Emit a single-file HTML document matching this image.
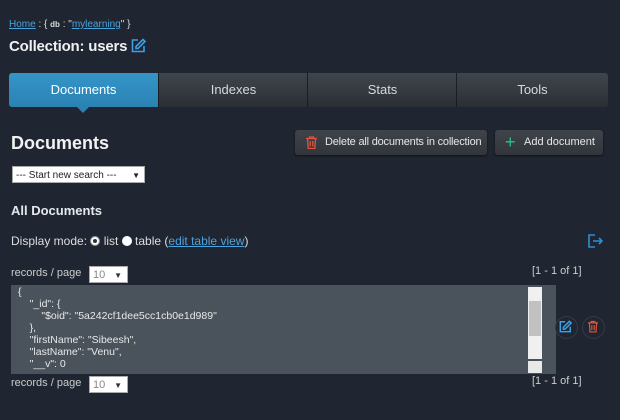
<!DOCTYPE html><html><head><style>
body{margin:0;width:620px;height:420px;background:#1f2631;font-family:"Liberation Sans",sans-serif;color:#e6e9ec;position:relative;overflow:hidden}
.a{position:absolute;white-space:nowrap}
a{color:#4aa3df;text-decoration:underline}
.tab{position:absolute;top:73px;height:34px;line-height:34px;text-align:center;font-size:13px;color:#d6d9dc;background:linear-gradient(#40454c,#2b2f35);border-left:1px solid #1a1d22}
.btn{position:absolute;top:130px;height:25px;line-height:25px;font-size:11px;background:linear-gradient(#3f444a,#32363c);border-radius:3px;color:#e6e6e6;box-shadow:0 1px 2px #111;white-space:nowrap}
.sel{position:absolute;background:#fff;color:#888;font-size:11px;height:17px;line-height:17px;padding-left:3px;border:1px solid #aaa;box-sizing:border-box;white-space:nowrap}
</style></head><body>
<div class="a" style="left:9px;top:19px;font-size:10px;color:#ddd"><a>Home</a> : { <b style="font-size:8px">db</b> : "<a>mylearning</a>" }</div>
<div class="a" style="left:9px;top:38px;font-size:15px;font-weight:bold;color:#f0f0f0;letter-spacing:-0.2px">Collection: users</div>
<svg class="a" style="left:131px;top:38px" width="15" height="15" viewBox="0 0 15 15" fill="none" stroke="#3ba0e6" stroke-width="1.6"><path d="M7 2H1.5v11.5H13V8"/><path d="M12 1.5l2 2-7 7H5V8.5z"/></svg>
<div class="tab" style="left:9px;width:149px;background:linear-gradient(#3595c8,#2a82b2);color:#fff;border-radius:3px 0 0 3px;border:none">Documents</div>
<div class="a" style="left:76px;top:106px;width:0;height:0;border:7px solid transparent;border-top-color:#2a82b2"></div>
<div class="tab" style="left:158px;width:149px">Indexes</div>
<div class="tab" style="left:307px;width:149px">Stats</div>
<div class="tab" style="left:456px;width:151px;border-radius:0 3px 3px 0">Tools</div>
<div class="a" style="left:11px;top:133px;font-size:18px;font-weight:bold;color:#f2f2f2">Documents</div>
<div class="btn" style="left:295px;width:192px"><svg class="a" style="left:11px;top:6px" width="11" height="13" viewBox="0 0 11 13" fill="none" stroke="#e0553e" stroke-width="1.3"><path d="M0 2.5h11M3.5 2.5V1h4v1.5M1.5 2.5l.7 10h6.6l.7-10M4.2 5v5.5M6.8 5v5.5"/></svg><span class="a" style="left:30px;letter-spacing:-0.2px">Delete all documents in collection</span></div>
<div class="btn" style="left:495px;width:108px"><span class="a" style="left:10px;color:#2fbf8a;font-size:18px;line-height:24px">+</span><span class="a" style="left:29px">Add document</span></div>
<div class="sel" style="left:12px;top:166px;width:133px;color:#222;font-size:10px">--- Start new search --- <span style="position:absolute;right:4px;font-size:8px">▼</span></div>
<div class="a" style="left:11px;top:203px;font-size:13px;font-weight:bold">All Documents</div>
<div class="a" style="left:11px;top:234px;font-size:12px;color:#ddd">Display mode: <span style="display:inline-block;width:10px;height:10px;border-radius:50%;background:#fff;border:1px solid #999;box-sizing:border-box;vertical-align:-1px;box-shadow:inset 0 0 0 2px #fff,inset 0 0 0 5px #333"></span> list <span style="display:inline-block;width:10px;height:10px;border-radius:50%;background:#fff;vertical-align:-1px"></span> table (<a>edit table view</a>)</div>
<svg class="a" style="left:588px;top:234px" width="15" height="14" viewBox="0 0 15 14" fill="none" stroke="#2b8fd8" stroke-width="1.6"><path d="M7 1H1v12h6"/><path d="M5 7h9M11 4l3 3-3 3"/></svg>
<div class="a" style="left:11px;top:267px;font-size:11px;color:#ccc">records / page</div>
<div class="sel" style="left:89px;top:266px;width:39px">10<span style="position:absolute;right:5px;font-size:8px;color:#333">▼</span></div>
<div class="a" style="left:532px;top:265px;font-size:11px;color:#ccc">[1 - 1 of 1]</div>
<div class="a" style="left:11px;top:285px;width:545px;height:89px;background:#4a535c"></div>
<pre class="a" style="left:18px;top:286px;margin:0;white-space:pre;font-family:'Liberation Sans',sans-serif;font-size:10.5px;line-height:12px;color:#e8e8e8">{
    "_id": {
        "$oid": "5a242cf1dee5cc1cb0e1d989"
    },
    "firstName": "Sibeesh",
    "lastName": "Venu",
    "__v": 0</pre>
<div class="a" style="left:528px;top:287px;width:14px;height:72px;background:#f0f0f0"></div>
<div class="a" style="left:529px;top:301px;width:12px;height:35px;background:#c1c1c1"></div>
<div class="a" style="left:528px;top:361px;width:14px;height:12px;background:#e8e8e8"></div>
<div class="a" style="left:555px;top:316px;width:21px;height:21px;border-radius:50%;border:1px solid #333a44"></div>
<svg class="a" style="left:559px;top:320px" width="13" height="13" viewBox="0 0 15 15" fill="none" stroke="#3ba0e6" stroke-width="1.7"><path d="M7 2H1.5v11.5H13V8"/><path d="M12 1.5l2 2-7 7H5V8.5z"/></svg>
<div class="a" style="left:582px;top:316px;width:21px;height:21px;border-radius:50%;border:1px solid #333a44"></div>
<svg class="a" style="left:588px;top:320px" width="10" height="13" viewBox="0 0 11 13" fill="none" stroke="#e0553e" stroke-width="1.3"><path d="M0 2.5h11M3.5 2.5V1h4v1.5M1.5 2.5l.7 10h6.6l.7-10M4.2 5v5.5M6.8 5v5.5"/></svg>
<div class="a" style="left:11px;top:377px;font-size:11px;color:#ccc">records / page</div>
<div class="sel" style="left:89px;top:376px;width:39px">10<span style="position:absolute;right:5px;font-size:8px;color:#333">▼</span></div>
<div class="a" style="left:532px;top:375px;font-size:11px;color:#ccc">[1 - 1 of 1]</div>
</body></html>
